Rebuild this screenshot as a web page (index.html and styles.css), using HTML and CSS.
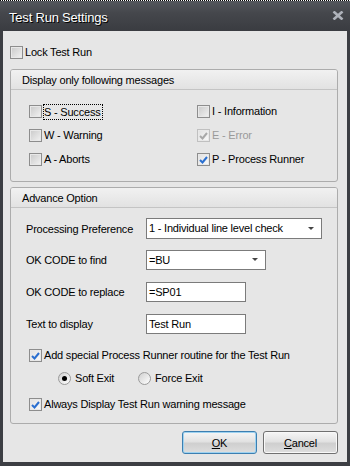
FILE: index.html
```html
<!doctype html>
<html lang="en">
<head>
	<meta charset="UTF-8">
	<title>Test Run Settings</title>
	<link rel="stylesheet" href="styles.css">
</head>
<body>
	<div class="dialog">
		<div class="dots"></div>
		<div class="titlebar">
			<span class="title">Test Run Settings</span>
			<svg class="close" width="12" height="9" viewBox="0 0 12 9"><path d="M1.5 0.5 L10.5 8.5 M10.5 0.5 L1.5 8.5" stroke="#aeb2ba" stroke-width="2.6"/></svg>
		</div>
		<div class="content">
			<label class="check lock"><span class="box"></span>Lock Test Run</label>

			<div class="group g1">
				<div class="ghead">Display only following messages</div>
				<div class="gbody msgs">
					<label class="check"><span class="box"></span><span class="focus">S - Success</span></label>
					<label class="check"><span class="box"></span>I - Information</label>
					<label class="check"><span class="box"></span>W - Warning</label>
					<label class="check disabled"><span class="box on"><svg width="9" height="8" viewBox="0 0 9 8"><path d="M1 4 L3.5 6.5 L8 1" fill="none" stroke="#a8a8a8" stroke-width="2"/></svg></span>E - Error</label>
					<label class="check"><span class="box"></span>A - Aborts</label>
					<label class="check"><span class="box on"><svg width="9" height="8" viewBox="0 0 9 8"><path d="M1 4 L3.5 6.5 L8 1" fill="none" stroke="#2a6fd0" stroke-width="2"/></svg></span>P - Process Runner</label>
				</div>
			</div>

			<div class="group g2">
				<div class="ghead">Advance Option</div>
				<div class="gbody adv">
					<div class="field f1">
						<span class="lbl">Processing Preference</span>
						<span class="combo wide">1 - Individual line level check<i class="arrow"></i></span>
					</div>
					<div class="field f2">
						<span class="lbl">OK CODE to find</span>
						<span class="combo mid">=BU<i class="arrow"></i></span>
					</div>
					<div class="field f3">
						<span class="lbl">OK CODE to replace</span>
						<span class="edit">=SP01</span>
					</div>
					<div class="field f4">
						<span class="lbl">Text to display</span>
						<span class="edit">Test Run</span>
					</div>
					<label class="check special"><span class="box on"><svg width="9" height="8" viewBox="0 0 9 8"><path d="M1 4 L3.5 6.5 L8 1" fill="none" stroke="#2a6fd0" stroke-width="2"/></svg></span>Add special Process Runner routine for the Test Run</label>
					<div class="radios">
						<label class="radio soft"><span class="dot on"></span>Soft Exit</label>
						<label class="radio"><span class="dot"></span>Force Exit</label>
					</div>
					<label class="check always"><span class="box on"><svg width="9" height="8" viewBox="0 0 9 8"><path d="M1 4 L3.5 6.5 L8 1" fill="none" stroke="#2a6fd0" stroke-width="2"/></svg></span>Always Display Test Run warning message</label>
				</div>
			</div>

			<div class="buttons">
				<button class="btn default"><u>O</u>K</button>
				<button class="btn"><u>C</u>ancel</button>
			</div>
		</div>
	</div>
</body>
</html>
```

FILE: styles.css
```css
*{
	margin: 0;
	padding: 0;
	box-sizing: border-box;
}
body{
	width: 350px;
	height: 466px;
	overflow: hidden;
	font-family: "Liberation Sans", Arial, sans-serif;
	font-size: 11px;
	letter-spacing: -0.2px;
	color: #000;
}
.dialog{
	width: 350px;
	height: 466px;
	display: flex;
	flex-direction: column;
	background: #3c3e43;
}
.dots{
	height: 1px;
	background: repeating-linear-gradient(90deg, #000 0 1px, #fff 1px 2px);
}
.titlebar{
	height: 30px;
	display: flex;
	align-items: center;
	justify-content: space-between;
	padding: 0 6px 0 9px;
	background: linear-gradient(#54575d, #45474c 40%, #3a3c41);
}
.title{
	color: #fff;
	font-size: 13px;
	text-shadow: 1px 1px 0 #000;
	margin-top: 2px;
}
.close{
	margin-top: -2px;
}
.content{
	flex: 1;
	margin: 0 3px 4px 3px;
	background: #e6e6e6;
	display: flex;
	flex-direction: column;
	padding: 15px 9px 0 7px;
}
.check{
	display: flex;
	align-items: center;
	height: 13px;
	line-height: 13px;
	white-space: nowrap;
}
.box{
	width: 13px;
	height: 13px;
	border: 1px solid #8d8d8d;
	background: linear-gradient(135deg, #c9c9c9, #f2f2f2);
	box-shadow: inset 0 0 0 1px #e8e8e8;
	margin-right: 2px;
	display: flex;
	align-items: center;
	justify-content: center;
	flex: none;
}
.box.on{
	background: linear-gradient(135deg, #e0e0e0, #fafafa);
}
.disabled{
	color: #9a9a9a;
}
.disabled .box{
	border-color: #c0c0c0;
}
.focus{
	outline: 1px dotted #000;
	outline-offset: 0;
	padding: 0 1px 0 0;
	line-height: 14px;
}
.group{
	border: 1px solid #acacac;
	border-radius: 3px;
	overflow: hidden;
}
.g1{
	margin-top: 10px;
}
.g2{
	margin-top: 5px;
}
.ghead{
	height: 20px;
	line-height: 20px;
	padding-left: 11px;
	background: linear-gradient(#f1f1f1, #e2e2e2);
	border-bottom: 1px solid #c4c4c4;
}
.msgs{
	display: grid;
	grid-template-columns: 168px auto;
	row-gap: 11px;
	padding: 15px 0 15px 18px;
}
.adv{
	display: flex;
	flex-direction: column;
	padding: 10px 0 12px 0;
}
.field{
	display: flex;
	align-items: center;
	padding-left: 15px;
}
.lbl{
	width: 120px;
}
.f2{
	margin-top: 11px;
}
.f3, .f4{
	margin-top: 12px;
}
.combo, .edit{
	position: relative;
	height: 21px;
	line-height: 19px;
	background: #fff;
	border: 1px solid #7b7b7b;
	padding-left: 2px;
	white-space: nowrap;
}
.edit{
	height: 20px;
	line-height: 18px;
	width: 100px;
}
.wide{
	width: 176px;
}
.mid{
	width: 120px;
	height: 20px;
	line-height: 18px;
}
.arrow{
	position: absolute;
	right: 7px;
	top: 8px;
	width: 0;
	height: 0;
	border-left: 3px solid transparent;
	border-right: 3px solid transparent;
	border-top: 3px solid #444;
}
.mid .arrow{
	top: 7px;
}
.special{
	margin-top: 15px;
	padding-left: 18px;
}
.radios{
	display: flex;
	margin-top: 10px;
	padding-left: 47px;
	height: 13px;
	line-height: 13px;
}
.radio{
	display: flex;
	align-items: center;
}
.soft{
	width: 80px;
}
.dot{
	width: 13px;
	height: 13px;
	border-radius: 50%;
	border: 1px solid #9a9a9a;
	background: linear-gradient(135deg, #d0d0d0, #fff);
	margin-right: 4px;
	display: flex;
	align-items: center;
	justify-content: center;
}
.dot.on::after{
	content: "";
	width: 5px;
	height: 5px;
	border-radius: 50%;
	background: #000;
}
.always{
	margin-top: 13px;
	padding-left: 18px;
}
.buttons{
	display: flex;
	justify-content: flex-end;
	gap: 6px;
	margin-top: 7px;
}
.btn{
	width: 75px;
	height: 23px;
	font-family: inherit;
	font-size: 11px;
	letter-spacing: inherit;
	color: #000;
	border: 1px solid #707070;
	border-radius: 3px;
	background: linear-gradient(#f6f6f6, #e2e2e2 45%, #cfcfcf 55%, #dedede);
	box-shadow: inset 0 0 0 1px #f8f8f8;
}
.btn.default{
	border-color: #3c7fb1;
	box-shadow: inset 0 0 0 1px #9ed2f0;
}
```
